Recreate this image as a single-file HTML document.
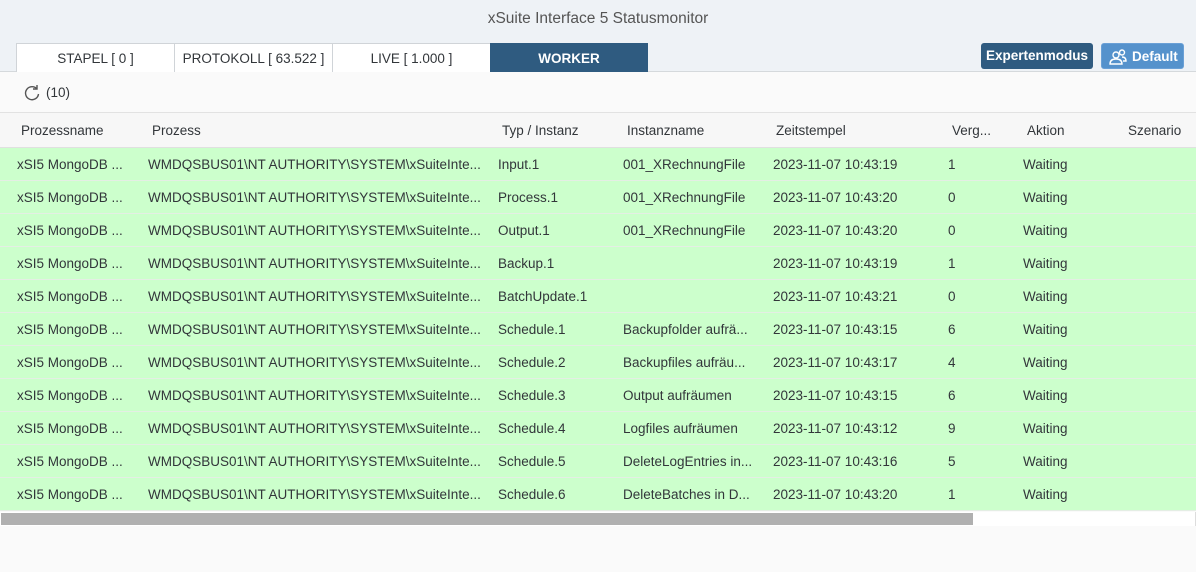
<!DOCTYPE html>
<html><head><meta charset="utf-8"><style>
*{box-sizing:border-box;margin:0;padding:0}
body{width:1196px;height:572px;overflow:hidden;background:#fafafa;font-family:"Liberation Sans",sans-serif;color:#32363a;font-size:13.5px;position:relative}
.hdr{position:absolute;left:0;top:0;width:1196px;height:72px;background:#eef2f6;border-bottom:1px solid #d5d9dc}
.title{position:absolute;top:10px;width:100%;text-align:center;font-size:15.5px;color:#555}
.tab{position:absolute;top:43px;height:29px;background:#fff;border:1px solid #d0d4d8;border-bottom:none;text-align:center;line-height:29px;font-size:13.5px;color:#32363a}
.tab.act{background:#2f5b80;color:#fff;font-weight:bold;border-color:#2f5b80}
.btn{position:absolute;top:43px;height:26px;border-radius:3px;color:#fff;font-weight:bold;font-size:13.5px;line-height:26px;text-align:center}
.tb{position:absolute;top:73px;left:0;width:1196px;height:40px;background:#fafafa;border-bottom:1px solid #e2e2e2}
.th{position:absolute;top:113px;left:0;width:1196px;height:35px;background:#f7f7f7;border-bottom:1px solid #e0e0e0}
.c{position:absolute;white-space:nowrap}
.row{position:absolute;left:0;width:1196px;height:33px;background:#ccffcc;border-bottom:1px solid #e4eee4;line-height:33px}
.th .c{line-height:35px}
</style></head><body>
<div class="hdr">
<div class="title">xSuite Interface 5 Statusmonitor</div>
<div class="tab" style="left:16px;width:159px">STAPEL [ 0 ]</div>
<div class="tab" style="left:174px;width:159px">PROTOKOLL [ 63.522 ]</div>
<div class="tab" style="left:332px;width:159px">LIVE [ 1.000 ]</div>
<div class="tab act" style="left:490px;width:158px">WORKER</div>
<div class="btn" style="left:981px;width:112px;background:#2f5b80">Expertenmodus</div>
<div class="btn" style="left:1101px;width:83px;background:#5592cc;border:1px solid #6aa0d6">
<svg width="18" height="16" viewBox="0 0 18 16" style="position:absolute;left:7px;top:5px" fill="none" stroke="#fff" stroke-width="1.4"><circle cx="7" cy="6" r="3"/><path d="M1 15c0-4 3-5 6-5s6 1 6 5z"/><circle cx="13" cy="3.5" r="2.5"/><path d="M13 8c2.5 0 4 1 4 4h-3"/></svg>
<span style="position:absolute;left:30px">Default</span></div>
</div>
<div class="tb">
<svg width="18" height="18" viewBox="0 0 18 18" style="position:absolute;left:23px;top:11px" fill="none" stroke="#555" stroke-width="1.4"><path d="M14 5A6.5 6.5 0 1 0 15.5 10"/><path d="M14 1v4h-4"/></svg>
<span class="c" style="left:46px;top:12px">(10)</span>
</div>
<div class="th">
<span class="c" style="left:21px">Prozessname</span>
<span class="c" style="left:152px">Prozess</span>
<span class="c" style="left:502px">Typ / Instanz</span>
<span class="c" style="left:627px">Instanzname</span>
<span class="c" style="left:776px">Zeitstempel</span>
<span class="c" style="left:952px">Verg...</span>
<span class="c" style="left:1027px">Aktion</span>
<span class="c" style="left:1128px">Szenario</span>
</div>
<div id="rows"></div>
<div style="position:absolute;left:0;top:512px;width:1196px;height:14px;background:#fff;border-right:1px solid #ddd"></div>
<div style="position:absolute;left:1px;top:513px;width:972px;height:12px;background:#b0b0b0"></div>
<script>
var d=[["Input.1","001_XRechnungFile","19","1"],["Process.1","001_XRechnungFile","20","0"],["Output.1","001_XRechnungFile","20","0"],["Backup.1","","19","1"],["BatchUpdate.1","","21","0"],["Schedule.1","Backupfolder aufrä...","15","6"],["Schedule.2","Backupfiles aufräu...","17","4"],["Schedule.3","Output aufräumen","15","6"],["Schedule.4","Logfiles aufräumen","12","9"],["Schedule.5","DeleteLogEntries in...","16","5"],["Schedule.6","DeleteBatches in D...","20","1"]];
var h="";d.forEach(function(r,i){h+='<div class="row" style="top:'+(148+i*33)+'px"><span class="c" style="left:17px">xSI5 MongoDB ...</span><span class="c" style="left:148px">WMDQSBUS01\\NT AUTHORITY\\SYSTEM\\xSuiteInte...</span><span class="c" style="left:498px">'+r[0]+'</span><span class="c" style="left:623px">'+r[1]+'</span><span class="c" style="left:773px">2023-11-07 10:43:'+r[2]+'</span><span class="c" style="left:948px">'+r[3]+'</span><span class="c" style="left:1023px">Waiting</span></div>'});
document.getElementById("rows").innerHTML=h;
</script>
</body></html>
